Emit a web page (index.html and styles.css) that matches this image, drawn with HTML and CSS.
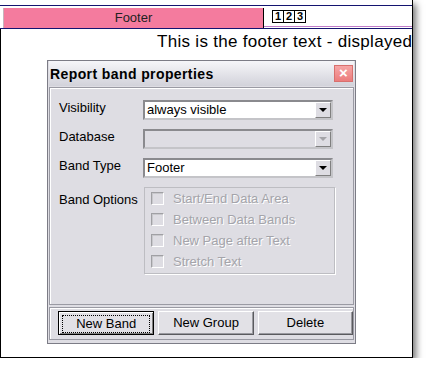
FILE: index.html
```html
<!DOCTYPE html>
<html lang="en">
<head>
    <meta charset="UTF-8">
    <title>Report band properties</title>
    <link rel="stylesheet" href="styles.css">
</head>
<body>

<div class="page">
    <div class="band-head">
        <div class="band-name">Footer</div>
        <div class="band-nums">
            <span>1</span><span>2</span><span>3</span>
        </div>
    </div>
    <div class="band-body">
        <p class="footer-text">This is the footer text - displayed</p>
    </div>

    <div class="dialog">
        <div class="title-bar">
            <span class="title">Report band properties</span>
            <span class="close">&#215;</span>
        </div>

        <div class="panel">
            <div class="row">
                <label>Visibility</label>
                <div class="select">
                    <span class="value">always visible</span>
                    <span class="arrow"><i></i></span>
                </div>
            </div>
            <div class="row">
                <label>Database</label>
                <div class="select disabled">
                    <span class="value"></span>
                    <span class="arrow"><i></i></span>
                </div>
            </div>
            <div class="row">
                <label>Band Type</label>
                <div class="select">
                    <span class="value">Footer</span>
                    <span class="arrow"><i></i></span>
                </div>
            </div>
            <div class="row options-row">
                <label>Band Options</label>
                <div class="options">
                    <div class="check"><span class="box"></span>Start/End Data Area</div>
                    <div class="check"><span class="box"></span>Between Data Bands</div>
                    <div class="check"><span class="box"></span>New Page after Text</div>
                    <div class="check"><span class="box"></span>Stretch Text</div>
                </div>
            </div>
        </div>

        <div class="buttons">
            <button class="btn default"><span>New Band</span></button>
            <button class="btn"><span>New Group</span></button>
            <button class="btn"><span>Delete</span></button>
        </div>
    </div>
</div>

</body>
</html>
```

FILE: styles.css
```css
body {
    font-family: "Liberation Sans", Arial, sans-serif;
    margin: 0;
    padding: 0;
    background-color: #fff;
}

.page {
    position: relative;
    width: 412px;
    height: 352px;
    padding-top: 5px;
    border-right: 1px solid #000;
    border-bottom: 1px solid #000;
    box-shadow: 3px 4px 7px rgba(0, 0, 0, 0.55);
    overflow: hidden;
    background-color: #fff;
}

/* report band header */
.band-head {
    display: flex;
    padding-top: 2px;
    border-top: 1px solid #141470;
    border-bottom: 1px solid #141470;
}

.band-name {
    margin-left: 3px;
    width: 259px;
    height: 20px;
    line-height: 20px;
    text-align: center;
    font-size: 13px;
    color: #222;
    background-color: #f47b9e;
    border-left: 1px solid #c8b4bc;
    border-right: 1px solid #000;
}

.band-nums {
    flex: 1;
    align-self: flex-start;
    height: 19px;
    box-sizing: border-box;
    padding: 2px 0 0 8px;
    border-bottom: 1px solid #c07cc8;
    display: flex;
}

.band-nums span {
    width: 10px;
    height: 11px;
    line-height: 11px;
    text-align: center;
    font-size: 11px;
    font-weight: bold;
    border: 1px solid #000;
    margin-right: -1px;
}

.band-body {
    height: 400px;
    border-left: 1px solid #000;
}

.footer-text {
    margin: 0;
    padding: 3px 0 0 156px;
    font-size: 17px;
    line-height: 19px;
    letter-spacing: 0.3px;
    color: #000;
    white-space: nowrap;
}

/* dialog window */
.dialog {
    position: absolute;
    left: 47px;
    top: 60px;
    width: 309px;
    height: 284px;
    box-sizing: border-box;
    padding: 0 1px 1px 1px;
    border: 1px solid #7c7c86;
    background-color: #dedde3;
    font-size: 13px;
}

.title-bar {
    height: 25px;
    display: flex;
    align-items: center;
    justify-content: space-between;
    padding: 0 1px 0 1px;
    background: linear-gradient(#f6f6f9, #d2d2da);
}

.title {
    font-size: 14px;
    letter-spacing: 0.4px;
    font-weight: bold;
    color: #000;
}

.close {
    width: 17px;
    height: 15px;
    line-height: 14px;
    text-align: center;
    color: #fff;
    font-weight: bold;
    font-size: 15px;
    background: linear-gradient(#f6a6a6, #ec7c7c);
    border: 1px solid #d8706e;
}

.panel {
    margin-top: 1px;
    height: 218px;
    box-sizing: border-box;
    padding: 12px 0 0 9px;
    border: 1px solid #9a9aa3;
    box-shadow: inset 1px 1px #fff;
}

.row {
    display: flex;
    align-items: flex-start;
    margin-bottom: 9px;
}

.row label {
    width: 84px;
    line-height: 16px;
    color: #000;
}

.options-row label {
    padding-top: 5px;
}

.select {
    width: 190px;
    height: 20px;
    box-sizing: border-box;
    display: flex;
    background-color: #fff;
    border: 2px solid;
    border-color: #8a8a8e #c4c4c8 #c4c4c8 #8a8a8e;
}

.select .value {
    flex: 1;
    padding-left: 2px;
    line-height: 16px;
    color: #000;
}

.select .arrow {
    width: 16px;
    height: 16px;
    box-sizing: border-box;
    display: flex;
    align-items: center;
    justify-content: center;
    background-color: #dedde3;
    border: 1px solid;
    border-color: #fff #808080 #808080 #fff;
}

.select .arrow i {
    width: 0;
    height: 0;
    border-left: 4px solid transparent;
    border-right: 4px solid transparent;
    border-top: 4px solid #000;
}

.select.disabled {
    background-color: #dedde3;
}

.select.disabled .arrow i {
    border-top-color: #a4a4a8;
}

.options {
    margin-left: 1px;
    width: 191px;
    height: 87px;
    box-sizing: border-box;
    padding: 4px 0 0 6px;
    border: 1px solid #bdbdc2;
    box-shadow: 1px 1px #fff;
}

.check {
    display: flex;
    align-items: flex-start;
    height: 21px;
    line-height: 14px;
    color: #a4a4aa;
    text-shadow: 1px 1px 0 #fff;
}

.box {
    width: 13px;
    height: 13px;
    box-sizing: border-box;
    margin-right: 9px;
    border: 1px solid;
    border-color: #a0a0a4 #fff #fff #a0a0a4;
    box-shadow: inset 1px 1px #c8c8cc;
}

.buttons {
    margin-top: 2px;
    height: 33px;
    box-sizing: border-box;
    padding: 3px 0 0 8px;
    display: flex;
    gap: 4px;
    border: 1px solid #9a9aa3;
    box-shadow: inset 1px 1px #fff;
}

.btn {
    width: 96px;
    height: 24px;
    padding: 0;
    font-family: "Liberation Sans", Arial, sans-serif;
    font-size: 13px;
    color: #000;
    background-color: #e2e1e6;
    border: 1px solid;
    border-color: #fff #5a5a5e #5a5a5e #fff;
    box-shadow: inset -1px -1px #9a9aa0;
}

.btn span {
    display: block;
    line-height: 16px;
}

.btn.default {
    width: 97px;
    padding: 3px 3px;
    border-color: #000;
    box-shadow: inset 1px 1px #fff, inset -1px -1px #808080;
}

.btn.default span {
    border: 1px dotted #000;
}
```
